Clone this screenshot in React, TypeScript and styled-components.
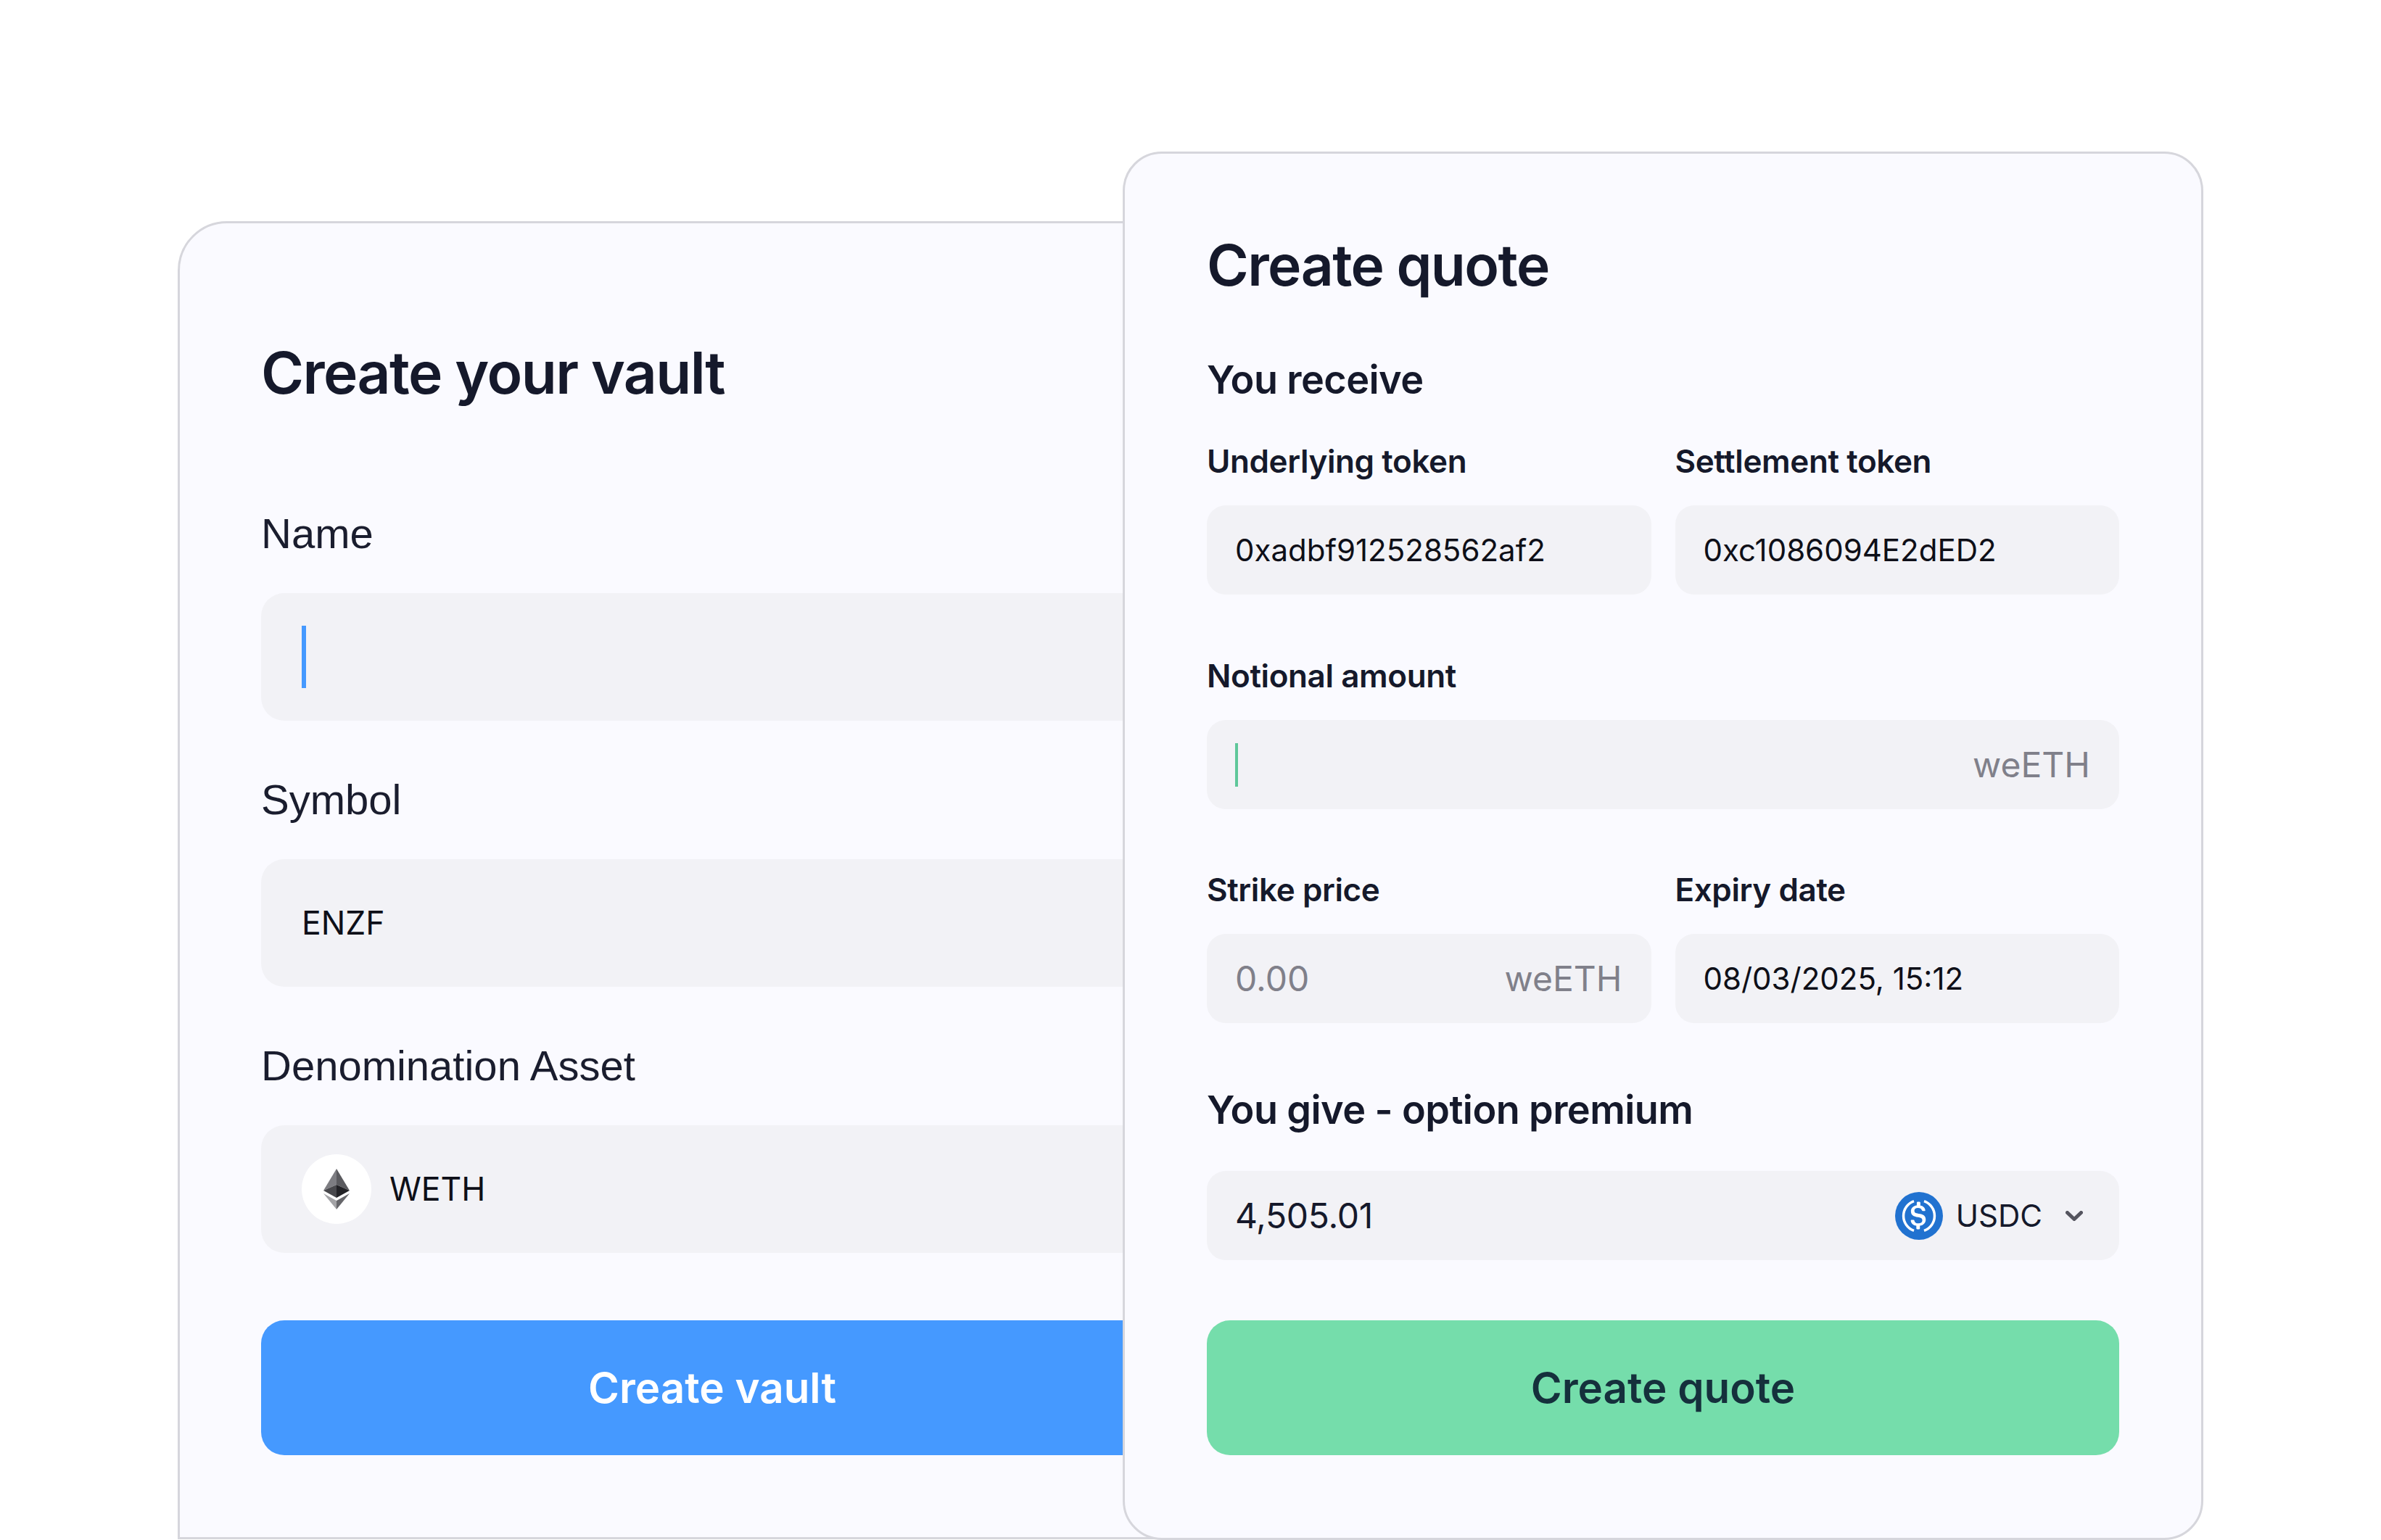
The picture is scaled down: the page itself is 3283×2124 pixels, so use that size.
import React from "react";
import styled, { createGlobalStyle } from "styled-components";

const Global = createGlobalStyle`
  html, body { margin: 0; padding: 0; background: #fff; }
  body { width: 3283px; height: 2124px; overflow: hidden; font-family: Inter, "Liberation Sans", sans-serif; color: #15192b; }
  * { box-sizing: border-box; }
`;

const Stage = styled.main`
  display: flex;
  align-items: flex-start;
  height: 2124px;
  padding: 209px 0 0 245px;
`;

const Card = styled.section`
  display: flex;
  flex-direction: column;
  background: #fafaff;
  border: 3px solid #d6d6dc;
`;

const VaultCard = styled(Card)`
  width: 1474px;
  height: 1818px;
  margin-top: 96px;
  padding: 158px 112px 0;
  border-radius: 68px 68px 0 0;
`;

const QuoteCard = styled(Card)`
  position: relative;
  width: 1490px;
  height: 1915px;
  margin-left: -171px;
  padding: 106px 113px 0;
  border-radius: 54px;
`;

const VaultTitle = styled.h1`
  margin: 0 0 142px;
  font-size: 80.2px;
  line-height: 96px;
  font-weight: 600;
  letter-spacing: -1.6px;
  color: #15192b;
`;

const QuoteTitle = styled(VaultTitle)`
  margin: 0 0 78px;
  font-size: 78.5px;
`;

const VaultField = styled.div`
  display: flex;
  flex-direction: column;
  gap: 50px;
  margin-bottom: 77px;
  &:last-of-type { margin-bottom: 93px; }
`;

const VaultLabel = styled.label`
  font-family: "Liberation Sans", Arial, sans-serif;
  font-size: 58px;
  line-height: 64px;
  font-weight: 400;
  color: #1a1d2e;
`;

const VaultInput = styled.div`
  display: flex;
  align-items: center;
  gap: 25px;
  height: 176px;
  padding: 0 56px;
  border-radius: 32px;
  background: #f2f2f6;
  font-size: 44.5px;
  color: #0e0f18;
`;

const Caret = styled.span<{ $color: string; $w: number; $h: number }>`
  display: block;
  width: ${(p) => p.$w}px;
  height: ${(p) => p.$h}px;
  background: ${(p) => p.$color};
`;

const CoinBadge = styled.span`
  display: flex;
  align-items: center;
  justify-content: center;
  width: 96px;
  height: 96px;
  border-radius: 50%;
  background: #fff;
`;

const Submit = styled.button<{ $bg: string; $fg: string }>`
  display: block;
  width: 100%;
  height: 186px;
  border: 0;
  border-radius: 32px;
  background: ${(p) => p.$bg};
  color: ${(p) => p.$fg};
  font-family: Inter, sans-serif;
  font-size: 58.3px;
  font-weight: 600;
`;

const QuoteSubmit = styled(Submit)`
  margin-top: 83px;
`;

const SectionHead = styled.h2`
  margin: 0 0 52px;
  font-size: 54px;
  line-height: 64px;
  font-weight: 600;
  letter-spacing: -0.6px;
  color: #15192b;
`;

const Row = styled.div<{ $mb: number }>`
  display: grid;
  grid-template-columns: 1fr 1fr;
  gap: 33px;
  margin-bottom: ${(p) => p.$mb}px;
`;

const QuoteField = styled.div<{ $mb?: number }>`
  display: flex;
  flex-direction: column;
  gap: 33px;
  margin-bottom: ${(p) => p.$mb ?? 0}px;
`;

const QuoteLabel = styled.label`
  font-size: 44px;
  line-height: 56px;
  font-weight: 600;
  letter-spacing: -0.4px;
  color: #15192b;
`;

const QuoteInput = styled.div`
  display: flex;
  align-items: center;
  justify-content: space-between;
  height: 123px;
  padding: 0 40px 0 39px;
  border-radius: 26px;
  background: #f2f2f6;
  font-size: 42px;
  color: #0e0f18;
`;

const PremiumInput = styled(QuoteInput)`
  padding-right: 50px;
`;

const Muted = styled.span`
  font-size: 48px;
  color: #80808a;
`;

const Amount = styled.span`
  font-size: 48px;
  letter-spacing: -0.3px;
  color: #15192b;
`;

const TokenPick = styled.span`
  display: flex;
  align-items: center;
  font-size: 42px;
  color: #15192b;
  svg:first-child { margin-right: 18px; }
  svg:last-child { margin-left: 32px; }
`;

const EthIcon = () => (
  <svg width="36" height="56" viewBox="0 0 36 56">
    <polygon points="18,0 0,30 18,22" fill="#7d7d82" />
    <polygon points="18,0 36,30 18,22" fill="#5a5a5e" />
    <polygon points="18,22 0,30 18,40" fill="#48484c" />
    <polygon points="18,22 36,30 18,40" fill="#222226" />
    <polygon points="0,34 18,56 18,44" fill="#a3a3a6" />
    <polygon points="36,34 18,56 18,44" fill="#66666a" />
  </svg>
);

const UsdcIcon = () => (
  <svg width="66" height="66" viewBox="0 0 32 32">
    <circle cx="16" cy="16" r="16" fill="#2172d0" />
    <path d="M12.6 6.1A10.5 10.5 0 0 0 12.6 25.9" fill="none" stroke="#fff" strokeWidth="1.7" />
    <path d="M19.4 6.1A10.5 10.5 0 0 1 19.4 25.9" fill="none" stroke="#fff" strokeWidth="1.7" />
    <path
      fill="#fff"
      d="M20.5 18.5c0-2.7-1.6-3.6-4.8-4-2.3-.3-2.8-.9-2.8-2s.8-1.8 2.4-1.8c1.4 0 2.2.5 2.6 1.6.1.2.3.4.5.4h1.3c.3 0 .5-.2.5-.5v-.1c-.3-1.6-1.6-2.9-3.3-3V7.2c0-.3-.2-.5-.6-.6h-1.2c-.3 0-.5.2-.6.6v1.8c-2.4.3-3.9 1.9-3.9 3.9 0 2.6 1.6 3.6 4.8 4 2.1.4 2.8.9 2.8 2.1s-1 2-2.5 2c-1.9 0-2.6-.8-2.8-1.9-.1-.3-.3-.4-.5-.4h-1.4c-.3 0-.5.2-.5.5v.1c.3 1.7 1.4 2.9 3.7 3.3v1.8c0 .3.2.5.6.6h1.2c.3 0 .5-.2.6-.6v-1.8c2.4-.4 3.9-2 3.9-4.1z"
    />
  </svg>
);

const Chevron = () => (
  <svg width="24" height="14" viewBox="0 0 24 14">
    <path d="M2.5 2.5 12 11.5 21.5 2.5" fill="none" stroke="#55555f" strokeWidth="5" strokeLinecap="round" strokeLinejoin="round" />
  </svg>
);

export default function App() {
  return (
    <>
      <Global />
      <Stage>
        <VaultCard>
          <VaultTitle>Create your vault</VaultTitle>
          <VaultField>
            <VaultLabel>Name</VaultLabel>
            <VaultInput>
              <Caret $color="#4599ff" $w={6} $h={86} />
            </VaultInput>
          </VaultField>
          <VaultField>
            <VaultLabel>Symbol</VaultLabel>
            <VaultInput>ENZF</VaultInput>
          </VaultField>
          <VaultField>
            <VaultLabel>Denomination Asset</VaultLabel>
            <VaultInput>
              <CoinBadge>
                <EthIcon />
              </CoinBadge>
              WETH
            </VaultInput>
          </VaultField>
          <Submit $bg="#4599ff" $fg="#fff">Create vault</Submit>
        </VaultCard>

        <QuoteCard>
          <QuoteTitle>Create quote</QuoteTitle>
          <SectionHead>You receive</SectionHead>
          <Row $mb={84}>
            <QuoteField>
              <QuoteLabel>Underlying token</QuoteLabel>
              <QuoteInput>0xadbf912528562af2</QuoteInput>
            </QuoteField>
            <QuoteField>
              <QuoteLabel>Settlement token</QuoteLabel>
              <QuoteInput>0xc1086094E2dED2</QuoteInput>
            </QuoteField>
          </Row>
          <QuoteField $mb={83}>
            <QuoteLabel>Notional amount</QuoteLabel>
            <QuoteInput>
              <Caret $color="#5fc79a" $w={4} $h={60} />
              <Muted>weETH</Muted>
            </QuoteInput>
          </QuoteField>
          <Row $mb={88}>
            <QuoteField>
              <QuoteLabel>Strike price</QuoteLabel>
              <QuoteInput>
                <Muted>0.00</Muted>
                <Muted>weETH</Muted>
              </QuoteInput>
            </QuoteField>
            <QuoteField>
              <QuoteLabel>Expiry date</QuoteLabel>
              <QuoteInput>08/03/2025, 15:12</QuoteInput>
            </QuoteField>
          </Row>
          <SectionHead>You give - option premium</SectionHead>
          <PremiumInput>
            <Amount>4,505.01</Amount>
            <TokenPick>
              <UsdcIcon />
              USDC
              <Chevron />
            </TokenPick>
          </PremiumInput>
          <QuoteSubmit $bg="#75ddab" $fg="#15303c">Create quote</QuoteSubmit>
        </QuoteCard>
      </Stage>
    </>
  );
}
